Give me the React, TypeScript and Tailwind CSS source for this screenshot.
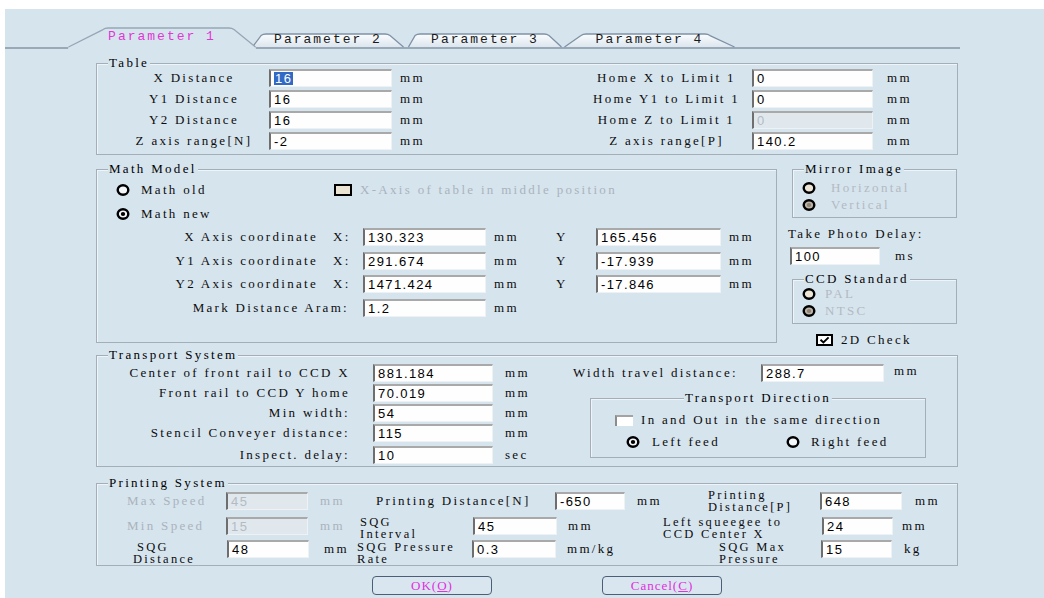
import React from "react";

type FieldProps = {
  value: string;
  className: string;
  disabled?: boolean;
  selected?: boolean;
};

// sunken edit box
function Field({ value, className, disabled, selected }: FieldProps) {
  return (
    <div
      className={`h-[18px] shrink-0 flex items-center pl-[3px] border-t-2 border-l-2 border-r border-b border-t-[#a9a9a9] border-l-[#6e6e6e] border-r-[#eef2f5] border-b-[#eef2f5] font-['Liberation_Sans',Arial,sans-serif] text-[13px] tracking-[1.4px] leading-none ${
        disabled ? "bg-[#e0e8ee] text-[#b3bbc2]" : "bg-[#fefefe] text-black"
      } ${className}`}
    >
      {selected ? <span className="bg-[#316ac5] text-white px-[1px]">{value}</span> : value}
    </div>
  );
}

function Radio({ checked, disabled }: { checked?: boolean; disabled?: boolean }) {
  const fill = disabled ? (checked ? "#bdb5a6" : "#ede5d5") : "#f3f7fa";
  return (
    <svg width="14" height="12" viewBox="0 0 14 12" className="shrink-0">
      <ellipse cx="7" cy="6" rx="5.3" ry="4.7" fill={fill} stroke="#000" strokeWidth="2.4" />
      {checked && <ellipse cx="7" cy="6" rx="2.2" ry="1.9" fill={disabled ? "#8c8578" : "#000"} />}
    </svg>
  );
}

function Group({
  title,
  className,
  center,
  children,
}: {
  title: string;
  className: string;
  center?: boolean;
  children?: React.ReactNode;
}) {
  return (
    <div className={`relative shrink-0 border border-[#a3aeb8] shadow-[inset_1px_1px_0_#eef4f8] ${className}`}>
      <span
        className={`absolute -top-[9px] px-[1px] leading-[16px] bg-[#d6e4ee] text-black whitespace-nowrap ${
          center ? "left-1/2 -translate-x-1/2" : "left-[11px]"
        }`}
      >
        {title}
      </span>
      {children}
    </div>
  );
}

type TabProps = {
  label: string;
  idx: number;
  w: number;
  tl: number;
  tr: number;
  active?: boolean;
  className: string;
};

// tab header shape: slanted sides, rounded top corners
function Tab({ label, idx, w, tl, tr, active, className }: TabProps) {
  const h = active ? 22 : 16;
  const base = h - 2;
  const top = 1;
  const outline = `M0.5 ${base} L${tl - 2} ${top + 1.6} Q${tl} ${top} ${tl + 3} ${top} L${tr - 3} ${top} Q${tr} ${top} ${tr + 2} ${top + 1.6} L${w - 0.5} ${base}`;
  const gid = `tabfill${idx}`;
  return (
    <div className={`relative shrink-0 -mb-[2px] ${className}`}>
      <svg className="absolute inset-0" width={w} height={h} viewBox={`0 0 ${w} ${h}`}>
        <defs>
          <linearGradient id={gid} x1="0" y1="0" x2="0" y2="1">
            <stop offset="0" stopColor="#fbfdfe" />
            <stop offset="1" stopColor="#dce6ee" />
          </linearGradient>
        </defs>
        <path
          d={active ? `${outline} L${w} ${h} L0 ${h} Z` : `${outline} Z`}
          fill={active ? "#d6e4ee" : `url(#${gid})`}
        />
        <path d={outline} fill="none" stroke={active ? "#97a6b5" : "#7f91a5"} strokeWidth="1.3" />
      </svg>
      <div
        className={`relative h-full flex items-center justify-center pb-[2px] font-['Liberation_Mono',monospace] text-[13px] tracking-[2px] whitespace-nowrap ${
          active ? "text-[#e036d6]" : "text-[#1a1a1a]"
        }`}
      >
        {label}
      </div>
    </div>
  );
}

const tableRows = [
  { l: "X Distance", v: "16", sel: true, rl: "Home X to Limit 1", rv: "0", rdis: false },
  { l: "Y1 Distance", v: "16", sel: false, rl: "Home Y1 to Limit 1", rv: "0", rdis: false },
  { l: "Y2 Distance", v: "16", sel: false, rl: "Home Z to Limit 1", rv: "0", rdis: true },
  { l: "Z axis range[N]", v: "-2", sel: false, rl: "Z axis range[P]", rv: "140.2", rdis: false },
];

const axisRows = [
  { l: "X Axis coordinate", x: "130.323", y: "165.456", gap: "mt-[3px]" },
  { l: "Y1 Axis coordinate", x: "291.674", y: "-17.939", gap: "mt-[4px]" },
  { l: "Y2 Axis coordinate", x: "1471.424", y: "-17.846", gap: "mt-[3px]" },
];

const transportRows = [
  { l: "Center of front rail to CCD X", v: "881.184", u: "mm" },
  { l: "Front rail to CCD Y home", v: "70.019", u: "mm" },
  { l: "Min width:", v: "54", u: "mm" },
  { l: "Stencil Conveyer distance:", v: "115", u: "mm" },
];

export default function App() {
  return (
    <div className="w-[1044px] h-[598px] bg-white pt-[9px] pl-[5px] overflow-hidden">
      <div className="h-full bg-[#d6e4ee] text-[#0c0c0c] font-['Liberation_Serif','Times_New_Roman',serif] text-[13px] tracking-[2.3px]">
        {/* tab headers */}
        <div className="relative flex items-end h-[40px] w-[955px] border-b-2 border-[#9aa9b8]">
          <Tab label="Parameter 1" idx={1} w={188} tl={37} tr={164} active className="z-10 ml-[63px] w-[188px] h-[22px]" />
          <Tab label="Parameter 2" idx={2} w={152} tl={11} tr={136} className="-ml-[4px] w-[152px] h-[16px]" />
          <Tab label="Parameter 3" idx={3} w={154} tl={9} tr={139} className="ml-[4px] w-[154px] h-[16px]" />
          <Tab label="Parameter 4" idx={4} w={171} tl={19} tr={144} className="ml-[2px] w-[171px] h-[16px]" />
        </div>

        <div className="ml-[91px] w-[862px] mt-[14px]">
          {/* Table */}
          <Group title="Table" className="h-[92px] pt-[3px]">
            {tableRows.map((r) => (
              <div key={r.l} className="flex items-center h-[21px]">
                <span className="shrink-0 ml-[36px] w-[122px] text-center whitespace-nowrap">{r.l}</span>
                <Field value={r.v} selected={r.sel} className="ml-[14px] w-[123px]" />
                <span className="shrink-0 ml-[8px] w-[40px]">mm</span>
                <span className="shrink-0 ml-[148px] w-[157px] text-center whitespace-nowrap">{r.rl}</span>
                <Field value={r.rv} disabled={r.rdis} className="ml-[7px] w-[121px]" />
                <span className="shrink-0 ml-[14px]">mm</span>
              </div>
            ))}
          </Group>

          <div className="flex mt-[14px] h-[174px]">
            {/* Math Model */}
            <Group title="Math Model" className="w-[681px] h-[174px] pt-[10px]">
              <div className="flex items-center h-[20px]">
                <div className="shrink-0 ml-[19px] w-[218px] flex items-center">
                  <Radio />
                  <span className="ml-[11px]">Math old</span>
                </div>
                <span className="shrink-0 w-[18px] h-[12px] border-2 border-black bg-[#ece4d3]" />
                <span className="shrink-0 ml-[8px] w-[267px] overflow-hidden whitespace-nowrap text-[#aab3bb]">
                  X-Axis of table in middle position
                </span>
              </div>
              <div className="flex items-center h-[20px] mt-[4px]">
                <div className="ml-[19px] flex items-center">
                  <Radio checked />
                  <span className="ml-[11px]">Math new</span>
                </div>
              </div>
              {axisRows.map((r) => (
                <div key={r.l} className={`flex items-center h-[20px] ${r.gap}`}>
                  <span className="shrink-0 w-[221px] text-right whitespace-nowrap">{r.l}</span>
                  <span className="shrink-0 ml-[15px] w-[30px]">X:</span>
                  <Field value={r.x} className="w-[123px]" />
                  <span className="shrink-0 ml-[8px] w-[62px]">mm</span>
                  <span className="shrink-0 w-[40px]">Y</span>
                  <Field value={r.y} className="w-[125px]" />
                  <span className="shrink-0 ml-[8px]">mm</span>
                </div>
              ))}
              <div className="flex items-center h-[20px] mt-[4px]">
                <span className="shrink-0 w-[252px] text-right whitespace-nowrap">Mark Distance Aram:</span>
                <Field value="1.2" className="ml-[14px] w-[123px]" />
                <span className="shrink-0 ml-[8px]">mm</span>
              </div>
            </Group>

            {/* camera options */}
            <div className="ml-[11px] w-[170px] shrink-0">
              <Group title="Mirror Image" className="ml-[4px] w-[165px] h-[49px] pt-[10px]">
                <div className="flex items-center h-[16px] ml-[9px] text-[#b3bac1]">
                  <Radio disabled />
                  <span className="ml-[15px]">Horizontal</span>
                </div>
                <div className="flex items-center h-[16px] mt-[1px] ml-[9px] text-[#b3bac1]">
                  <Radio disabled checked />
                  <span className="ml-[15px]">Vertical</span>
                </div>
              </Group>
              <div className="mt-[8px] h-[16px] flex items-center whitespace-nowrap">Take Photo Delay:</div>
              <div className="mt-[4px] flex items-center">
                <Field value="100" className="ml-[2px] w-[90px]" />
                <span className="ml-[15px]">ms</span>
              </div>
              <Group title="CCD Standard" className="mt-[13px] ml-[4px] w-[165px] h-[45px] pt-[6px]">
                <div className="flex items-center h-[16px] ml-[9px] text-[#b3bac1]">
                  <Radio disabled />
                  <span className="ml-[9px]">PAL</span>
                </div>
                <div className="flex items-center h-[16px] mt-[1px] ml-[9px] text-[#b3bac1]">
                  <Radio disabled checked />
                  <span className="ml-[9px]">NTSC</span>
                </div>
              </Group>
              <div className="mt-[8px] h-[16px] flex items-center">
                <svg width="17" height="12" viewBox="0 0 17 12" className="ml-[28px] shrink-0">
                  <rect x="1" y="1" width="15" height="10" fill="#fff" stroke="#000" strokeWidth="2" />
                  <path d="M4.5 5.8 L7.4 8.4 L12.6 3.4" fill="none" stroke="#000" strokeWidth="2" />
                </svg>
                <span className="ml-[8px]">2D Check</span>
              </div>
            </div>
          </div>

          {/* Transport System */}
          <Group title="Transport System" className="mt-[12px] h-[112px] pt-[7px] flex">
            <div className="w-[476px] shrink-0">
              {transportRows.map((r) => (
                <div key={r.l} className="flex items-center h-[20px]">
                  <span className="shrink-0 w-[253px] text-right whitespace-nowrap">{r.l}</span>
                  <Field value={r.v} className="ml-[23px] w-[120px]" />
                  <span className="shrink-0 ml-[12px]">{r.u}</span>
                </div>
              ))}
              <div className="flex items-center h-[20px] mt-[2px]">
                <span className="shrink-0 w-[253px] text-right whitespace-nowrap">Inspect. delay:</span>
                <Field value="10" className="ml-[23px] w-[120px]" />
                <span className="shrink-0 ml-[12px]">sec</span>
              </div>
            </div>
            <div>
              <div className="flex items-center h-[20px]">
                <span className="shrink-0 w-[188px] whitespace-nowrap">Width travel distance:</span>
                <Field value="288.7" className="w-[123px]" />
                <span className="shrink-0 ml-[10px] -mt-[4px]">mm</span>
              </div>
              <Group title="Transport Direction" center className="ml-[17px] mt-[15px] w-[336px] h-[60px] pt-[12px]">
                <div className="flex items-center h-[18px]">
                  <span className="shrink-0 ml-[24px] w-[18px] h-[11px] border-t-2 border-l-2 border-t-[#a3a3a3] border-l-[#8c8c8c] bg-white" />
                  <span className="ml-[8px] whitespace-nowrap">In and Out in the same direction</span>
                </div>
                <div className="flex items-center h-[18px] mt-[4px]">
                  <div className="shrink-0 ml-[35px] w-[160px] flex items-center">
                    <Radio checked />
                    <span className="ml-[12px]">Left feed</span>
                  </div>
                  <Radio />
                  <span className="ml-[11px]">Right feed</span>
                </div>
              </Group>
            </div>
          </Group>

          {/* Printing System */}
          <Group title="Printing System" className="mt-[16px] h-[83px] pt-[7px]">
            <div className="flex items-center h-[20px]">
              <span className="shrink-0 ml-[30px] w-[99px] text-[#aab3bb] whitespace-nowrap">Max Speed</span>
              <Field value="45" disabled className="w-[82px]" />
              <span className="shrink-0 ml-[12px] w-[56px] text-[#aab3bb]">mm</span>
              <span className="shrink-0 w-[179px] whitespace-nowrap">Printing Distance[N]</span>
              <Field value="-650" className="w-[70px]" />
              <span className="shrink-0 ml-[12px] w-[71px]">mm</span>
              <span className="shrink-0 w-[112px] text-[12.5px] leading-[12px] whitespace-nowrap">
                Printing
                <br />
                Distance[P]
              </span>
              <Field value="648" className="w-[82px]" />
              <span className="shrink-0 ml-[13px]">mm</span>
            </div>
            <div className="flex items-center h-[20px] mt-[5px]">
              <span className="shrink-0 ml-[30px] w-[99px] text-[#aab3bb] whitespace-nowrap">Min Speed</span>
              <Field value="15" disabled className="w-[82px]" />
              <span className="shrink-0 ml-[12px] w-[40px] text-[#aab3bb]">mm</span>
              <span className="shrink-0 w-[113px] pt-[3px] text-[12.5px] leading-[12px] whitespace-nowrap">
                SQG
                <br />
                Interval
              </span>
              <Field value="45" className="w-[84px]" />
              <span className="shrink-0 ml-[11px] w-[95px]">mm</span>
              <span className="shrink-0 w-[159px] pt-[3px] text-[12.5px] leading-[12px] whitespace-nowrap">
                Left squeegee to
                <br />
                CCD Center X
              </span>
              <Field value="24" className="w-[71px]" />
              <span className="shrink-0 ml-[9px]">mm</span>
            </div>
            <div className="flex items-center h-[26px]">
              <span className="shrink-0 ml-[36px] w-[94px] pt-[7px] text-[12.5px] leading-[12px] whitespace-nowrap">
                <span className="pl-[4px]">SQG</span>
                <br />
                Distance
              </span>
              <Field value="48" className="w-[82px]" />
              <span className="shrink-0 ml-[15px] w-[33px]">mm</span>
              <span className="shrink-0 w-[115px] pt-[7px] text-[12.5px] leading-[12px] whitespace-nowrap">
                SQG Pressure
                <br />
                Rate
              </span>
              <Field value="0.3" className="w-[84px]" />
              <span className="shrink-0 ml-[11px] w-[152px]">mm/kg</span>
              <span className="shrink-0 w-[102px] pt-[7px] text-[12.5px] leading-[12px] whitespace-nowrap">
                SQG Max
                <br />
                Pressure
              </span>
              <Field value="15" className="w-[71px]" />
              <span className="shrink-0 ml-[12px]">kg</span>
            </div>
          </Group>

          {/* dialog buttons */}
          <div className="flex mt-[10px]">
            <button className="ml-[276px] w-[120px] h-[19px] rounded-[4px] border-[1.5px] border-[#4d5f77] bg-[#d9e6ef] text-[#e030e0] leading-none tracking-[1px]">
              OK(<span className="underline">O</span>)
            </button>
            <button className="ml-[110px] w-[120px] h-[19px] rounded-[4px] border-[1.5px] border-[#4d5f77] bg-[#d9e6ef] text-[#e030e0] leading-none tracking-[1px]">
              Cancel(<span className="underline">C</span>)
            </button>
          </div>
        </div>
      </div>
    </div>
  );
}
